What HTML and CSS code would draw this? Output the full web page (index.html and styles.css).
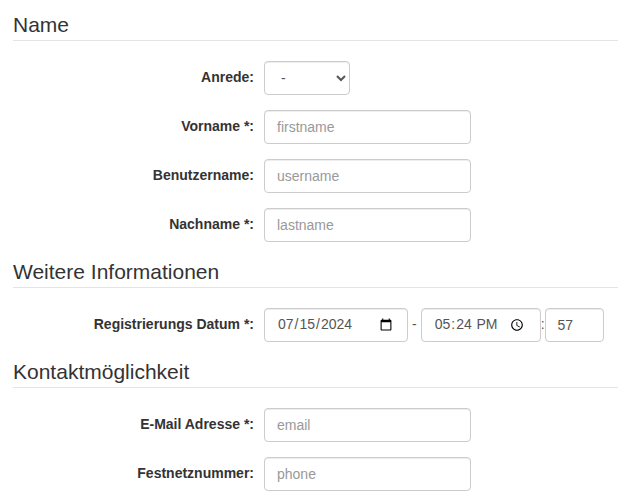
FILE: index.html
```html
<!DOCTYPE html>
<html lang="de">
<head>
<meta charset="utf-8">
<title>Registrierung</title>
<link rel="stylesheet" href="styles.css">
</head>
<body>
<form class="form">
  <fieldset class="section">
    <legend class="legend">Name</legend>
    <div class="row">
      <label class="label" for="anrede">Anrede:</label>
      <select id="anrede" class="control select">
        <option>-</option>
        <option>Herr</option>
        <option>Frau</option>
      </select>
    </div>
    <div class="row">
      <label class="label" for="vorname">Vorname *:</label>
      <input id="vorname" class="control text" type="text" placeholder="firstname">
    </div>
    <div class="row">
      <label class="label" for="benutzer">Benutzername:</label>
      <input id="benutzer" class="control text" type="text" placeholder="username">
    </div>
    <div class="row">
      <label class="label" for="nachname">Nachname *:</label>
      <input id="nachname" class="control text" type="text" placeholder="lastname">
    </div>
  </fieldset>
  <fieldset class="section">
    <legend class="legend">Weitere Informationen</legend>
    <div class="row">
      <label class="label" for="datum">Registrierungs Datum *:</label>
      <input id="datum" class="control date" type="date" value="2024-07-15">
      <span class="sep sep-dash">-</span>
      <input class="control time" type="time" value="17:24">
      <span class="sep sep-colon">:</span>
      <input class="control secs" type="text" value="57">
    </div>
  </fieldset>
  <fieldset class="section">
    <legend class="legend">Kontaktmöglichkeit</legend>
    <div class="row">
      <label class="label" for="email">E-Mail Adresse *:</label>
      <input id="email" class="control text" type="email" placeholder="email">
    </div>
    <div class="row">
      <label class="label" for="phone">Festnetznummer:</label>
      <input id="phone" class="control text" type="text" placeholder="phone">
    </div>
  </fieldset>
</form>
</body>
</html>
```
FILE: styles.css
```css
* { box-sizing: border-box; }
html, body {
  margin: 0;
  background: #fff;
}
body {
  font-family: "Liberation Sans", Arial, Helvetica, sans-serif;
  font-size: 14px;
  line-height: 1.42857;
  color: #333;
}
.form {
  padding: 10px 0 0 13px;
}
.section {
  margin: 0;
  padding: 0;
  border: 0;
  min-width: 0;
}
.legend {
  display: block;
  width: 100%;
  padding: 0;
  margin: 0 0 20px 0;
  font-size: 21px;
  line-height: 30px;
  color: #333;
  border: 0;
  border-bottom: 1px solid #e5e5e5;
}
.row {
  display: flex;
  align-items: center;
  margin-bottom: 15px;
}
.label {
  flex: 0 0 251px;
  padding-right: 10px;
  text-align: right;
  font-weight: bold;
}
.control {
  height: 34px;
  padding: 6px 12px;
  font-family: "Liberation Sans", Arial, Helvetica, sans-serif;
  font-size: 14px;
  line-height: 1.42857;
  color: #555;
  background-color: #fff;
  border: 1px solid #ccc;
  border-radius: 4px;
  box-shadow: inset 0 1px 1px rgba(0,0,0,.075);
}
.control::placeholder { color: #999; }
.text { width: 207px; }
.select { width: 86px; }
.date { width: 144px; }
.time { width: 120px; }
.secs { width: 59px; }
.sep { color: #555; }
.sep-dash { padding: 0 4px; }
.sep-colon { padding: 0; }
```
